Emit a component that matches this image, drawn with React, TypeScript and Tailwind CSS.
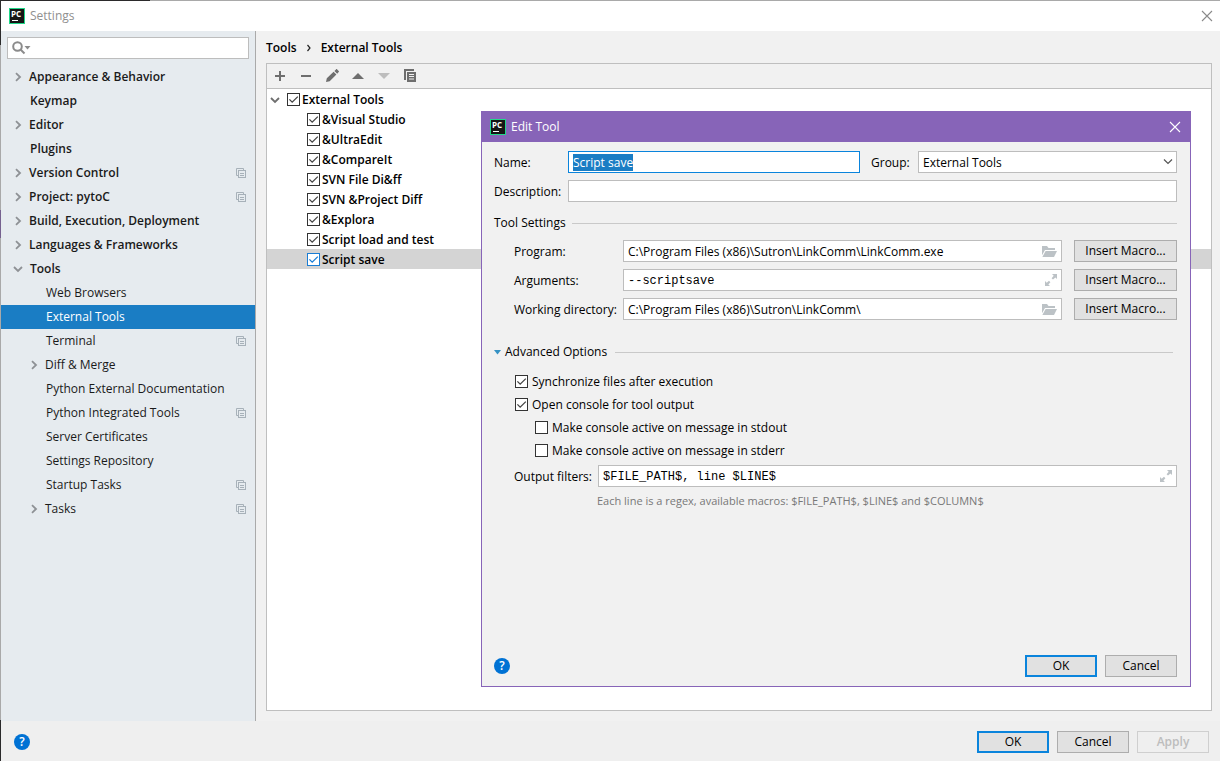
import React from 'react';

interface NavItem {
    label: string;
    level: 0 | 1;
    arrow?: 'right' | 'down';
    project?: boolean;
    selected?: boolean;
}

const navItems: NavItem[] = [
    { label: 'Appearance & Behavior', level: 0, arrow: 'right' },
    { label: 'Keymap', level: 0 },
    { label: 'Editor', level: 0, arrow: 'right' },
    { label: 'Plugins', level: 0 },
    { label: 'Version Control', level: 0, arrow: 'right', project: true },
    { label: 'Project: pytoC', level: 0, arrow: 'right', project: true },
    { label: 'Build, Execution, Deployment', level: 0, arrow: 'right' },
    { label: 'Languages & Frameworks', level: 0, arrow: 'right' },
    { label: 'Tools', level: 0, arrow: 'down' },
    { label: 'Web Browsers', level: 1 },
    { label: 'External Tools', level: 1, selected: true },
    { label: 'Terminal', level: 1, project: true },
    { label: 'Diff & Merge', level: 1, arrow: 'right' },
    { label: 'Python External Documentation', level: 1 },
    { label: 'Python Integrated Tools', level: 1, project: true },
    { label: 'Server Certificates', level: 1 },
    { label: 'Settings Repository', level: 1 },
    { label: 'Startup Tasks', level: 1, project: true },
    { label: 'Tasks', level: 1, arrow: 'right', project: true },
];

const tools = [
    '&Visual Studio',
    '&UltraEdit',
    '&CompareIt',
    'SVN File Di&ff',
    'SVN &Project Diff',
    '&Explora',
    'Script load and test',
    'Script save',
];

function PyCharmLogo() {
    return (
        <svg width="16" height="16" viewBox="0 0 16 16" aria-hidden="true" className="shrink-0">
            <rect width="16" height="16" fill="#21d789" />
            <rect x="1" y="1" width="14" height="14" fill="#151515" />
            <text x="2" y="9" fontSize="8" fontWeight="700" fill="#fff" fontFamily="Open Sans, sans-serif">PC</text>
            <rect x="3" y="12" width="6" height="1" fill="#fff" />
        </svg>
    );
}

function CloseIcon() {
    return (
        <svg width="12" height="12" viewBox="0 0 12 12" fill="none" stroke="currentColor" strokeWidth="1.1">
            <path d="M1 1l10 10M11 1L1 11" />
        </svg>
    );
}

function Chevron({ dir }: { dir: 'right' | 'down' }) {
    return (
        <svg width="10" height="10" viewBox="0 0 10 10" fill="none" stroke="currentColor" strokeWidth="1.8">
            <path d={dir === 'right' ? 'M3 1.2l4 3.8l-4 3.8' : 'M1 3l4 4l4-4'} />
        </svg>
    );
}

function ProjectIcon() {
    return (
        <svg width="10" height="10" viewBox="0 0 10 10" fill="none" stroke="#a7b1b9">
            <path d="M2 7.5H.5V.5h7V2" />
            <rect x="2.5" y="2.5" width="7" height="7" />
            <path d="M4 5.5h4M4 7.5h4" />
        </svg>
    );
}

function FolderIcon() {
    return (
        <svg width="15" height="11" viewBox="0 0 15 11" fill="#bcc2c6">
            <path d="M0 9.2V0h5l1.5 2H13v2H3z" />
            <path d="M3.6 5H15l-3 6H.4z" />
        </svg>
    );
}

function ExpandIcon() {
    return (
        <svg width="12" height="12" viewBox="0 0 12 12" fill="#bcc2c6">
            <path d="M7 0h5v5l-1.6-1.6L8 5.6L6.6 4.2L8.7 1.7z" />
            <path d="M0 7v5h5l-1.6-1.6L5.4 8.2L4 6.8L1.7 8.7z" />
        </svg>
    );
}

function HelpButton() {
    return (
        <button aria-label="Help" className="flex size-4 shrink-0 items-center justify-center rounded-full bg-[#0072d4] text-[12px] font-semibold leading-4 text-white">
            ?
        </button>
    );
}

interface CheckProps {
    label: string;
    checked?: boolean;
    accent?: boolean;
    className?: string;
}

function Check({ label, checked = false, accent = false, className = '' }: CheckProps) {
    const [on, setOn] = React.useState(checked);
    return (
        <label className={`flex items-center whitespace-pre ${className}`}>
            <span className="relative flex size-[13px] shrink-0">
                <input
                    type="checkbox"
                    checked={on}
                    onChange={() => setOn(!on)}
                    className={`size-[13px] appearance-none border bg-white ${accent ? 'border-[#1a7dd4]' : 'border-[#333333]'}`}
                />
                {on && (
                    <svg width="13" height="13" viewBox="0 0 13 13" fill="none" stroke={accent ? '#1a7dd4' : '#444'} strokeWidth="1.3" className="pointer-events-none absolute inset-0">
                        <path d="M2.4 6.4l2.8 2.8l5.6-5.6" />
                    </svg>
                )}
            </span>
            {label}
        </label>
    );
}

interface PushButtonProps {
    children: React.ReactNode;
    primary?: boolean;
    disabled?: boolean;
    wide?: boolean;
}

function PushButton({ children, primary, disabled, wide }: PushButtonProps) {
    const look = primary
        ? 'border-2 border-[#0a84dc] bg-[#e1e1e1]'
        : disabled
            ? 'border border-[#cfcfcf] bg-[#efefef] font-semibold text-[#bdbdbd]'
            : 'border border-[#adadad] bg-[#e1e1e1]';
    return (
        <button disabled={disabled} className={`flex h-[22px] shrink-0 items-center justify-center leading-4 ${wide ? 'w-[103px]' : 'w-[72px]'} ${look}`}>
            {children}
        </button>
    );
}

interface FieldLabelProps {
    htmlFor: string;
    className: string;
    children: React.ReactNode;
}

function FieldLabel({ htmlFor, className, children }: FieldLabelProps) {
    return <label htmlFor={htmlFor} className={`shrink-0 whitespace-nowrap pt-0.5 ${className}`}>{children}</label>;
}

interface FieldProps {
    id: string;
    value: string;
    icon: React.ReactNode;
    mono?: boolean;
}

function IconField({ id, value, icon, mono }: FieldProps) {
    return (
        <div className="flex h-[22px] min-w-0 flex-1 items-center border border-[#bdbdbd] bg-white pr-1">
            <input id={id} defaultValue={value} className={`h-full min-w-0 flex-1 px-1 outline-none ${mono ? "pt-0.5 font-['Liberation_Mono',monospace]" : ''}`} />
            <button aria-label="Browse" className="shrink-0">{icon}</button>
        </div>
    );
}

function Sidebar() {
    return (
        <aside className="flex w-[255px] shrink-0 flex-col border-r border-[#aaaaaa] bg-[#e6ebef] pt-1.5">
            <div className="mx-1.5 flex h-[22px] items-center border border-[#bdbdbd] bg-white pl-1">
                <svg width="19" height="14" viewBox="0 0 19 14" fill="none" stroke="#8b8b8b" strokeWidth="2" className="shrink-0">
                    <circle cx="5.5" cy="5.5" r="4.3" />
                    <path d="M8.5 8.5l4 4" />
                    <path d="M12.5 5h6l-3 3.4z" fill="#8b8b8b" stroke="none" />
                </svg>
                <input aria-label="Search settings" className="h-full min-w-0 flex-1 outline-none" />
            </div>
            <nav className="mt-1.5">
                {navItems.map((item) => (
                    <a
                        key={item.label}
                        href="#"
                        className={`flex h-6 items-center pr-[9px] leading-4 ${item.level === 0 ? 'pl-3 font-semibold' : 'pl-7'} ${item.selected ? 'bg-[#1a7dc4] text-white' : 'text-[#1a1a1a]'}`}
                    >
                        <span className={`shrink-0 text-[#8e9195] ${item.arrow === 'right' ? 'w-4' : 'w-[17px]'}`}>{item.arrow && <Chevron dir={item.arrow} />}</span>
                        <span className="flex-1 whitespace-nowrap">{item.label}</span>
                        {item.project && <ProjectIcon />}
                    </a>
                ))}
            </nav>
        </aside>
    );
}

function Toolbar() {
    return (
        <div className="flex h-[25px] items-center gap-3 border-b border-[#bfbfbf] bg-[#f1f1f1] pl-1.5 text-[#6e6e6e]">
            <button aria-label="Add">
                <svg width="14" height="14" viewBox="0 0 14 14" fill="currentColor"><path d="M6 2h2v4h4v2H8v4H6V8H2V6h4z" /></svg>
            </button>
            <button aria-label="Remove">
                <svg width="14" height="14" viewBox="0 0 14 14" fill="currentColor"><path d="M2 6h10v2H2z" /></svg>
            </button>
            <button aria-label="Edit">
                <svg width="14" height="14" viewBox="0 0 14 14" fill="currentColor"><path d="M1 13l.8-3.7l6.8-6.6l2.8 2.8l-6.7 6.7zM9.4 2L11 .4c.4-.4.8-.4 1.2 0l1.5 1.5c.4.4.4.8 0 1.2L12.2 4.7z" /></svg>
            </button>
            <button aria-label="Move up">
                <svg width="14" height="14" viewBox="0 0 14 14" fill="currentColor"><path d="M1 10l6-6l6 6z" /></svg>
            </button>
            <button aria-label="Move down" disabled className="text-[#bdbdbd]">
                <svg width="14" height="14" viewBox="0 0 14 14" fill="currentColor"><path d="M1 4h12l-6 6z" /></svg>
            </button>
            <button aria-label="Copy">
                <svg width="14" height="14" viewBox="0 0 14 14" fill="currentColor">
                    <path d="M1 0h10v2H3v9H1z" />
                    <path fillRule="evenodd" d="M4 3h9v10H4zM6 5v1h5V5zM6 7v1h5V7zM6 9.500v1h5v-1z" />
                </svg>
            </button>
        </div>
    );
}

function ToolTree() {
    return (
        <div className="flex-1 bg-white font-semibold leading-4">
            <div className="flex h-5 items-center pt-px">
                <span className="flex w-5 shrink-0 pl-[3px] text-[#6e6e6e]"><Chevron dir="down" /></span>
                <Check label="External Tools" checked className="gap-0.5" />
            </div>
            {tools.map((tool) => (
                <div key={tool} className={`flex h-5 items-center pl-10 pt-px ${tool === 'Script save' ? 'bg-[#d4d4d4]' : ''}`}>
                    <Check label={tool} checked accent={tool === 'Script save'} className="gap-0.5" />
                </div>
            ))}
        </div>
    );
}

function EditToolDialog() {
    const nameRef = React.useRef<HTMLInputElement>(null);

    React.useEffect(() => {
        nameRef.current?.focus();
        nameRef.current?.select();
    }, []);

    return (
        <section role="dialog" aria-label="Edit Tool" className="absolute bottom-[74px] left-[481px] right-[29px] top-[111px] flex flex-col border border-[#8764b8] bg-[#f1f1f1]">
            <header className="flex h-[30px] shrink-0 items-center bg-[#8764b8] pl-2 pr-[9px] text-white">
                <PyCharmLogo />
                <h2 className="flex-1 pl-[5px]">Edit Tool</h2>
                <button aria-label="Close"><CloseIcon /></button>
            </header>

            <div className="flex flex-1 flex-col pb-[9px] pl-3 pr-[13px] pt-[9px]">
                <div className="flex items-center">
                    <FieldLabel htmlFor="name" className="w-[74px]">Name:</FieldLabel>
                    <input
                        id="name"
                        ref={nameRef}
                        defaultValue="Script save"
                        className="h-[22px] min-w-0 flex-1 border border-[#0a84dc] bg-white px-1 leading-4 outline-none selection:bg-[#1a7dc4] selection:text-white"
                    />
                    <FieldLabel htmlFor="group" className="w-[58px] pl-[11px]">Group:</FieldLabel>
                    <div className="relative flex w-[259px] shrink-0">
                        <select id="group" className="h-[22px] w-full appearance-none border border-[#bdbdbd] bg-white pl-1 pt-0.5 leading-4 outline-none">
                            <option>External Tools</option>
                        </select>
                        <svg width="10" height="10" viewBox="0 0 10 10" fill="none" stroke="#555" strokeWidth="1.2" className="pointer-events-none absolute right-1 top-1.5">
                            <path d="M1 2.500l4 4l4-4" />
                        </svg>
                    </div>
                </div>
                <div className="mt-[7px] flex items-center">
                    <FieldLabel htmlFor="description" className="w-[74px]">Description:</FieldLabel>
                    <input id="description" className="h-[22px] min-w-0 flex-1 border border-[#bdbdbd] bg-white px-1 outline-none" />
                </div>

                <div className="mt-[13px] flex items-center gap-1.5">
                    <h3>Tool Settings</h3>
                    <div className="h-px flex-1 bg-[#c9c9c9]" />
                </div>
                <div className="mt-[9px] flex flex-col gap-[7px] pl-5">
                    <div className="flex items-center">
                        <FieldLabel htmlFor="program" className="w-[109px]">Program:</FieldLabel>
                        <IconField id="program" value="C:\Program Files (x86)\Sutron\LinkComm\LinkComm.exe" icon={<FolderIcon />} />
                        <div className="ml-3"><PushButton wide>Insert Macro...</PushButton></div>
                    </div>
                    <div className="flex items-center">
                        <FieldLabel htmlFor="arguments" className="w-[109px]">Arguments:</FieldLabel>
                        <IconField id="arguments" value="--scriptsave" icon={<ExpandIcon />} mono />
                        <div className="ml-3"><PushButton wide>Insert Macro...</PushButton></div>
                    </div>
                    <div className="flex items-center">
                        <FieldLabel htmlFor="workdir" className="w-[109px]">Working directory:</FieldLabel>
                        <IconField id="workdir" value="C:\Program Files (x86)\Sutron\LinkComm\" icon={<FolderIcon />} />
                        <div className="ml-3"><PushButton wide>Insert Macro...</PushButton></div>
                    </div>
                </div>

                <div className="mt-6 flex items-center">
                    <button className="flex items-center gap-1">
                        <svg width="7" height="5" viewBox="0 0 7 5" fill="#3592c4"><path d="M0 0h7L3.500 4.500z" /></svg>
                        Advanced Options
                    </button>
                    <div className="ml-2 mr-1 h-px flex-1 bg-[#c9c9c9]" />
                </div>
                <div className="mt-2.5 flex flex-col pl-[21px]">
                    <Check label="Synchronize files after execution" checked className="h-[23px] gap-1" />
                    <Check label="Open console for tool output" checked className="h-[23px] gap-1" />
                    <Check label="Make console active on message in stdout" className="ml-5 h-[23px] gap-1" />
                    <Check label="Make console active on message in stderr" className="ml-5 h-[23px] gap-1" />
                </div>
                <div className="mt-[3px] flex items-center pl-5">
                    <FieldLabel htmlFor="filters" className="w-[84px]">Output filters:</FieldLabel>
                    <IconField id="filters" value="$FILE_PATH$, line $LINE$" icon={<ExpandIcon />} mono />
                </div>
                <p className="mt-1.5 pl-[103px] text-[11px] text-[#787878]">Each line is a regex, available macros: $FILE_PATH$, $LINE$ and $COLUMN$</p>

                <div className="mt-auto flex items-center">
                    <HelpButton />
                    <div className="ml-auto flex gap-2">
                        <PushButton primary>OK</PushButton>
                        <PushButton>Cancel</PushButton>
                    </div>
                </div>
            </div>
        </section>
    );
}

export default function App() {
    return (
        <div className="relative flex min-h-screen flex-col bg-[#f1f1f1] font-['Open_Sans',sans-serif] text-[12px] leading-4 text-black">
            <div className="flex h-px">
                <div className="w-[150px] bg-[#2b2a2b]" />
                <div className="flex-1 bg-[#a9a9a9]" />
            </div>
            <div className="flex flex-1">
                {/* Window edge */}
                <div className="flex w-px shrink-0 flex-col bg-[#a9a9a9]">
                    <div className="h-11 bg-[#2b2a2b]" />
                    <div className="mt-[165px] h-7 bg-[#75618f]" />
                    <div className="mt-auto h-[41px] bg-[#2b2a2b]" />
                </div>

                <div className="flex min-w-0 flex-1 flex-col">
                    <header className="flex h-[30px] shrink-0 items-center bg-white pl-2 pr-[7px] text-[#8f8f8f]">
                        <PyCharmLogo />
                        <h1 className="flex-1 pl-[5px]">Settings</h1>
                        <button aria-label="Close" className="text-[#8a8a8a]"><CloseIcon /></button>
                    </header>

                    <div className="flex flex-1">
                        <Sidebar />
                        <main className="flex min-w-0 flex-1 flex-col pb-2.5 pl-2.5 pr-2">
                            <div className="flex h-8 shrink-0 items-center gap-2.5 pt-0.5 font-semibold">
                                <span>Tools</span>
                                <svg width="4" height="8" viewBox="0 0 4 8" fill="none" stroke="#222" strokeWidth="1.2"><path d="M.5 1l2.500 3l-2.500 3" /></svg>
                                <span>External Tools</span>
                            </div>
                            <div className="flex flex-1 flex-col border border-[#bfbfbf]">
                                <Toolbar />
                                <ToolTree />
                            </div>
                        </main>
                    </div>

                    <footer className="flex h-10 shrink-0 items-center bg-[#efefef] pl-[13px] pr-[11px] pt-0.5">
                        <HelpButton />
                        <div className="ml-auto flex gap-2">
                            <PushButton primary>OK</PushButton>
                            <PushButton>Cancel</PushButton>
                            <PushButton disabled>Apply</PushButton>
                        </div>
                    </footer>
                </div>
            </div>

            <EditToolDialog />
        </div>
    );
}
